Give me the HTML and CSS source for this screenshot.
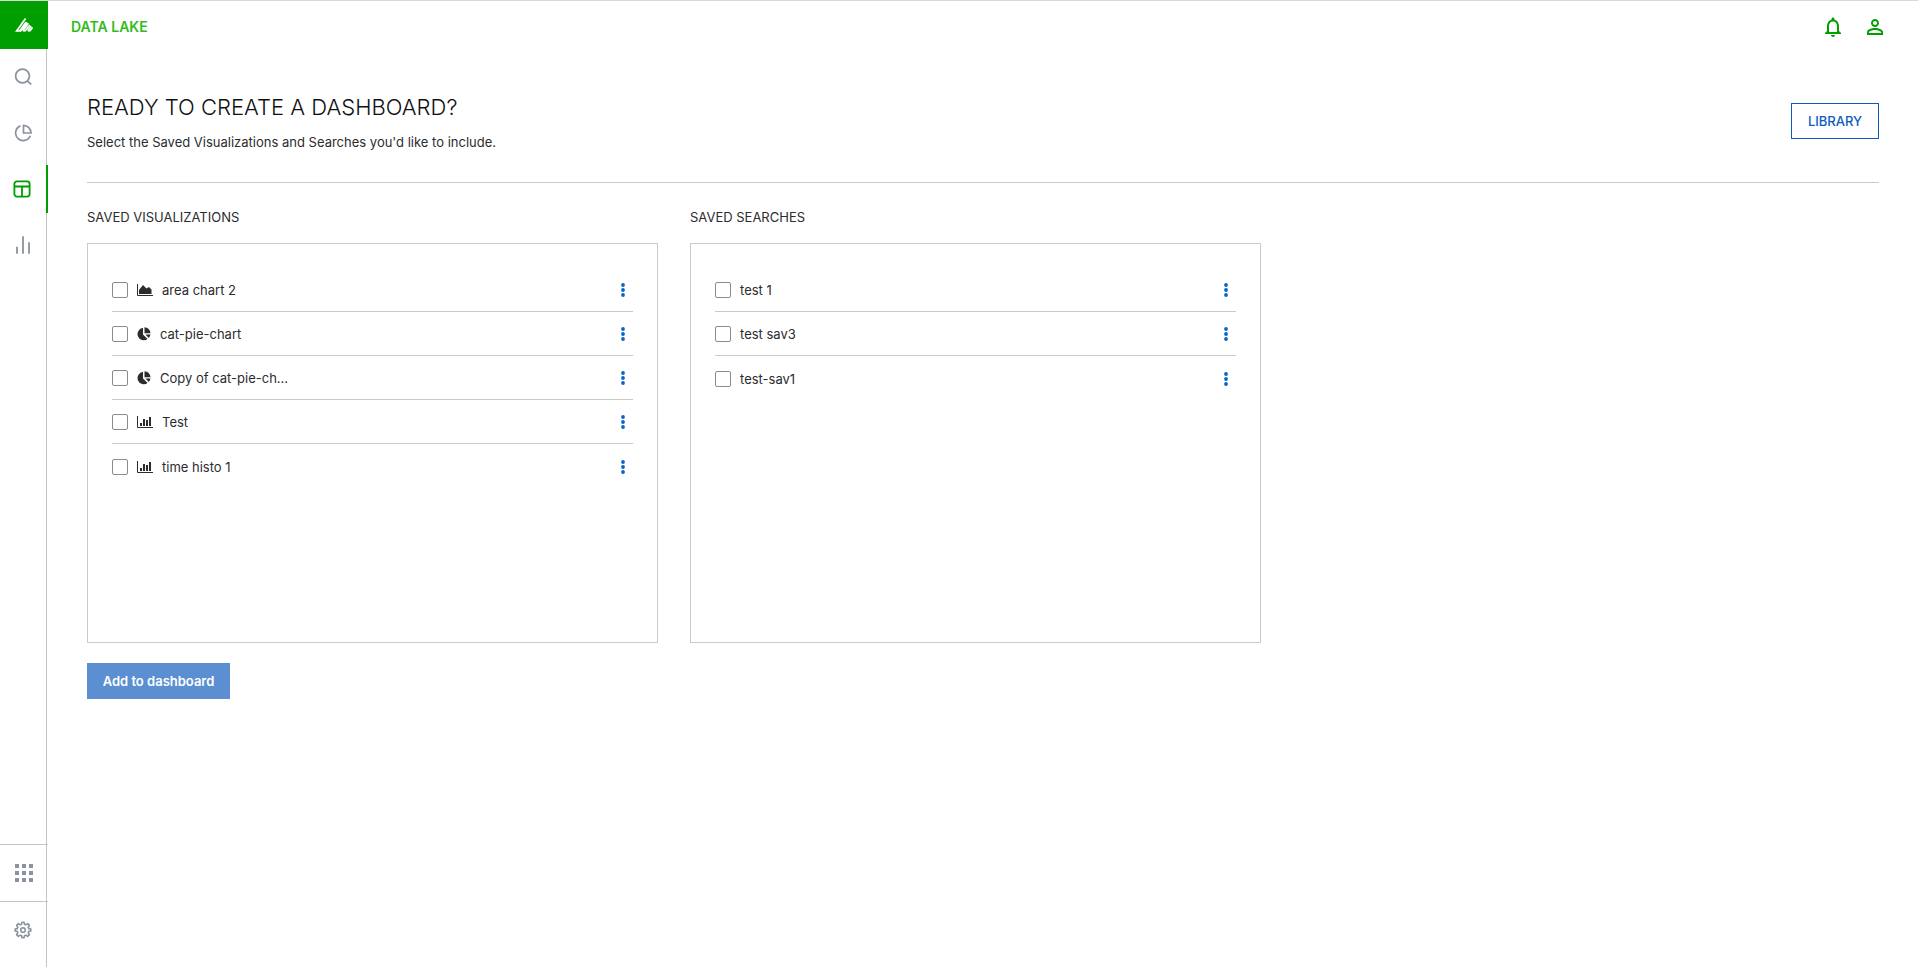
FILE: index.html
```html
<!DOCTYPE html>
<html lang="en">
<head>
<meta charset="utf-8">
<title>Data Lake</title>
<link rel="stylesheet" href="styles.css">
</head>
<body>
<svg class="sprite" aria-hidden="true">
  <symbol id="area" viewBox="0 0 16 14"><path d="M.5 1v11.500H16" fill="none" stroke="currentColor"/><path d="M2 11V7l4-5 3.500 3.500L12 4l2.500 2.500V11z" fill="currentColor"/></symbol>
  <symbol id="histo" viewBox="0 0 16 14"><path d="M.5 1v11.500H16" fill="none" stroke="currentColor"/><path d="M3 8h2v3H3zM6 4h2v7H6zM9 5h2v6H9zM12 2h2v9h-2z" fill="currentColor"/></symbol>
  <symbol id="pie" viewBox="0 0 14 14"><path d="M6 .8v6.700l4.600 4.600A6.300 6.300 0 1 1 6 .8z" fill="currentColor"/><path d="M7.500.2a6.300 6.300 0 0 1 6 6h-6zM8.500 7.600h5a6 6 0 0 1-1.700 3.400z" fill="currentColor"/></symbol>
  <symbol id="dots" viewBox="0 0 4 14"><g fill="currentColor"><circle cx="2" cy="2" r="1.900"/><circle cx="2" cy="7" r="1.900"/><circle cx="2" cy="12" r="1.900"/></g></symbol>
</svg>
<div class="app">
  <aside class="sidebar">
    <a class="logo" href="#" aria-label="Home"><svg width="18" height="14" viewBox="0 0 18 14" fill="none" stroke="currentColor" stroke-width="1.700"><path d="M10.600.5 1.600 13h4.200l6.200-8.500M4.800 12.800l6.200-8.600M13.300 5.200 8.600 11.700q-.6 1.300.6 1.300 1 0 1.700-1l3.900-5M16.200 8.200l-2.700 3.600q-.5 1.200.5 1.200 1 0 1.600-.9l2-2.600"/></svg></a>
    <nav class="nav">
      <a class="nav-item" href="#" aria-label="Search"><svg width="18" height="18" viewBox="0 0 18 18" fill="none" stroke="currentColor" stroke-width="1.700"><circle cx="8.500" cy="8" r="6.900"/><path d="m13.200 12.800 4 3.600"/></svg></a>
      <a class="nav-item" href="#" aria-label="Visualize"><svg width="18" height="18" viewBox="0 0 18 18" fill="none" stroke="currentColor" stroke-width="1.700"><path d="M6.500 1.900A7.600 7.600 0 1 0 16.300 11.800M9.500 1.300V9H17A7.700 7.700 0 0 0 9.500 1.300z"/></svg></a>
      <a class="nav-item nav-item-active" href="#" aria-label="Dashboards"><svg width="18" height="18" viewBox="0 0 18 18" fill="none" stroke="currentColor" stroke-width="1.800"><rect x="1.400" y="1.400" width="15.200" height="15.200" rx="2.500"/><path d="M1 6.500h16M9 6.500V17"/></svg></a>
      <a class="nav-item" href="#" aria-label="Reports"><svg width="18" height="18" viewBox="0 0 18 18" fill="none" stroke="currentColor" stroke-width="1.800" stroke-linecap="round"><path d="M3 11.500V17M9 1v16M15 7v10"/></svg></a>
    </nav>
    <div class="tools">
      <a class="tool" href="#" aria-label="Apps"><svg width="18" height="18" viewBox="0 0 18 18" fill="currentColor"><path d="M0 0h4v4H0zM7 0h4v4H7zM14 0h4v4h-4zM0 7h4v4H0zM7 7h4v4H7zM14 7h4v4h-4zM0 14h4v4H0zM7 14h4v4H7zM14 14h4v4h-4z"/></svg></a>
      <a class="tool tool-settings" href="#" aria-label="Settings"><svg width="18" height="18" viewBox="0 0 18 18" fill="none" stroke="currentColor" stroke-width="1.600" stroke-linejoin="round"><circle cx="9" cy="9" r="2.300"/><path d="M7.600 3.200 8 1.200h2l.4 2 1.400.6 1.800-1.200 1.800 1.800-1.200 1.800.6 1.400 2 .4v2l-2 .4-.6 1.400 1.200 1.800-1.800 1.800-1.800-1.200-1.400.6-.4 2H8l-.4-2-1.400-.6-1.800 1.200-1.800-1.800 1.200-1.800-.6-1.400-2-.4V8l2-.4.6-1.400-1.200-1.800 1.800-1.800 1.800 1.200z"/></svg></a>
    </div>
  </aside>
  <div class="page">
    <header class="topbar">
      <a class="brand" href="#">DATA LAKE</a>
      <div class="actions">
        <button class="icon-button" type="button" aria-label="Notifications"><svg width="24" height="24" viewBox="0 0 24 24" fill="currentColor"><path d="M12 22c1.100 0 2-.9 2-2h-4c0 1.100.9 2 2 2zm6-6v-5c0-3.070-1.630-5.640-4.500-6.320V4c0-.83-.67-1.500-1.500-1.500s-1.500.67-1.500 1.500v.68C7.640 5.360 6 7.920 6 11v5l-2 2v1h16v-1l-2-2zm-2 1H8v-6c0-2.480 1.510-4.500 4-4.500s4 2.020 4 4.500v6z"/></svg></button>
        <button class="icon-button" type="button" aria-label="Account"><svg width="24" height="24" viewBox="0 0 24 24" fill="currentColor"><path d="M12 5.900a2.100 2.100 0 1 1 0 4.200 2.100 2.100 0 0 1 0-4.200m0 9c2.970 0 6.100 1.460 6.100 2.100v1.100H5.900V17c0-.64 3.130-2.100 6.100-2.100M12 4C9.790 4 8 5.790 8 8s1.790 4 4 4 4-1.790 4-4-1.790-4-4-4zm0 9c-2.670 0-8 1.340-8 4v3h16v-3c0-2.660-5.330-4-8-4z"/></svg></button>
      </div>
    </header>
    <main class="content">
      <div class="intro">
        <div>
          <h1 class="title">READY TO CREATE A DASHBOARD?</h1>
          <p class="subtitle">Select the Saved Visualizations and Searches you'd like to include.</p>
        </div>
        <button class="library" type="button">LIBRARY</button>
      </div>
      <div class="columns">
        <section>
          <h2 class="section-title">SAVED VISUALIZATIONS</h2>
          <ul class="panel">
            <li class="row"><label class="choice"><input class="check" type="checkbox"><svg class="chart" width="16" height="14"><use href="#area"/></svg>area chart 2</label><button class="more" type="button" aria-label="More"><svg width="4" height="14"><use href="#dots"/></svg></button></li>
            <li class="row"><label class="choice"><input class="check" type="checkbox"><svg class="chart" width="14" height="14"><use href="#pie"/></svg>cat-pie-chart</label><button class="more" type="button" aria-label="More"><svg width="4" height="14"><use href="#dots"/></svg></button></li>
            <li class="row"><label class="choice"><input class="check" type="checkbox"><svg class="chart" width="14" height="14"><use href="#pie"/></svg>Copy of cat-pie-ch...</label><button class="more" type="button" aria-label="More"><svg width="4" height="14"><use href="#dots"/></svg></button></li>
            <li class="row"><label class="choice"><input class="check" type="checkbox"><svg class="chart" width="16" height="14"><use href="#histo"/></svg>Test</label><button class="more" type="button" aria-label="More"><svg width="4" height="14"><use href="#dots"/></svg></button></li>
            <li class="row"><label class="choice"><input class="check" type="checkbox"><svg class="chart" width="16" height="14"><use href="#histo"/></svg>time histo 1</label><button class="more" type="button" aria-label="More"><svg width="4" height="14"><use href="#dots"/></svg></button></li>
          </ul>
        </section>
        <section>
          <h2 class="section-title">SAVED SEARCHES</h2>
          <ul class="panel">
            <li class="row"><label class="choice"><input class="check" type="checkbox">test 1</label><button class="more" type="button" aria-label="More"><svg width="4" height="14"><use href="#dots"/></svg></button></li>
            <li class="row"><label class="choice"><input class="check" type="checkbox">test sav3</label><button class="more" type="button" aria-label="More"><svg width="4" height="14"><use href="#dots"/></svg></button></li>
            <li class="row"><label class="choice"><input class="check" type="checkbox">test-sav1</label><button class="more" type="button" aria-label="More"><svg width="4" height="14"><use href="#dots"/></svg></button></li>
          </ul>
        </section>
      </div>
      <button class="add" type="button">Add to dashboard</button>
    </main>
  </div>
</div>
</body>
</html>
```
FILE: styles.css
```css
* { box-sizing: border-box; }
body {
  margin: 0;
  background: #fff;
  color: #2c2c2f;
  font-family: Inter, "Liberation Sans", sans-serif;
  font-size: 13px;
  line-height: 20px;
}
h1, h2, p, ul { margin: 0; padding: 0; }
a { text-decoration: none; }
svg { display: block; flex: none; }
button { padding: 0; border: 0; background: none; font: inherit; cursor: pointer; }
.sprite { position: absolute; width: 0; height: 0; }
.app { display: flex; min-height: 100vh; border-top: 1px solid #d9d9d9; }

.sidebar {
  display: flex;
  flex-direction: column;
  flex: none;
  width: 47px;
  border-right: 1px solid #c4c4c4;
}
.logo {
  display: grid;
  place-items: center;
  width: 48px;
  height: 48px;
  background: #009e00;
  color: #fff;
}
.nav { display: flex; flex-direction: column; gap: 8px; padding-top: 4px; }
.nav-item {
  display: grid;
  place-items: center;
  width: 48px;
  height: 48px;
  padding-right: 2px;
  color: #8b929f;
}
.nav-item-active { border-right: 2px solid #009e00; color: #009e00; }
.tools { margin-top: auto; }
.tool {
  display: grid;
  place-items: center;
  width: 48px;
  height: 57px;
  border-top: 1px solid #c4c4c4;
  color: #8b929f;
}
.tool-settings { height: 66px; padding: 0 2px 10px 0; }

.page { flex: 1; min-width: 0; }
.topbar {
  display: flex;
  align-items: center;
  justify-content: space-between;
  height: 52px;
  padding: 0 31px 0 24px;
}
.brand { color: #33bb1c; font-size: 14px; font-weight: 600; }
.actions { display: flex; gap: 18px; }
.icon-button { color: #009e00; }

.content { padding: 40px 39px 40px 40px; }
.intro {
  display: flex;
  align-items: flex-start;
  justify-content: space-between;
  padding-bottom: 30px;
  border-bottom: 1px solid #cacaca;
}
.title { color: #101014; font-size: 22px; font-weight: 300; line-height: 28px; }
.subtitle { margin-top: 11px; }
.library {
  width: 88px;
  height: 36px;
  margin-top: 10px;
  border: 1px solid #0b5cbe;
  color: #0b5cbe;
  font-weight: 500;
}
.columns {
  display: grid;
  grid-template-columns: repeat(2, minmax(0, 571px));
  gap: 32px;
  padding-top: 24px;
}
.section-title { font-size: 13px; font-weight: 400; line-height: 20px; }
.panel {
  min-height: 400px;
  margin-top: 16px;
  padding: 24px;
  border: 1px solid #cacaca;
  list-style: none;
}
.row {
  display: flex;
  align-items: center;
  justify-content: space-between;
  height: 44px;
  border-bottom: 1px solid #cacaca;
}
.row:last-child { height: 46px; border-bottom: 0; }
.choice { display: flex; align-items: center; }
.check {
  appearance: none;
  width: 16px;
  height: 16px;
  margin: 0 9px 0 0;
  border: 1px solid #8c8c8c;
  border-radius: 2px;
  background: #fff;
}
.check:checked { background: #0b5cbe; }
.chart { margin-right: 9px; }
.more { padding: 4px 8px; color: #0766c4; }
.add {
  width: 143px;
  height: 36px;
  margin-top: 20px;
  background: #5b8fd2;
  color: #fff;
  font-weight: 600;
}
```
